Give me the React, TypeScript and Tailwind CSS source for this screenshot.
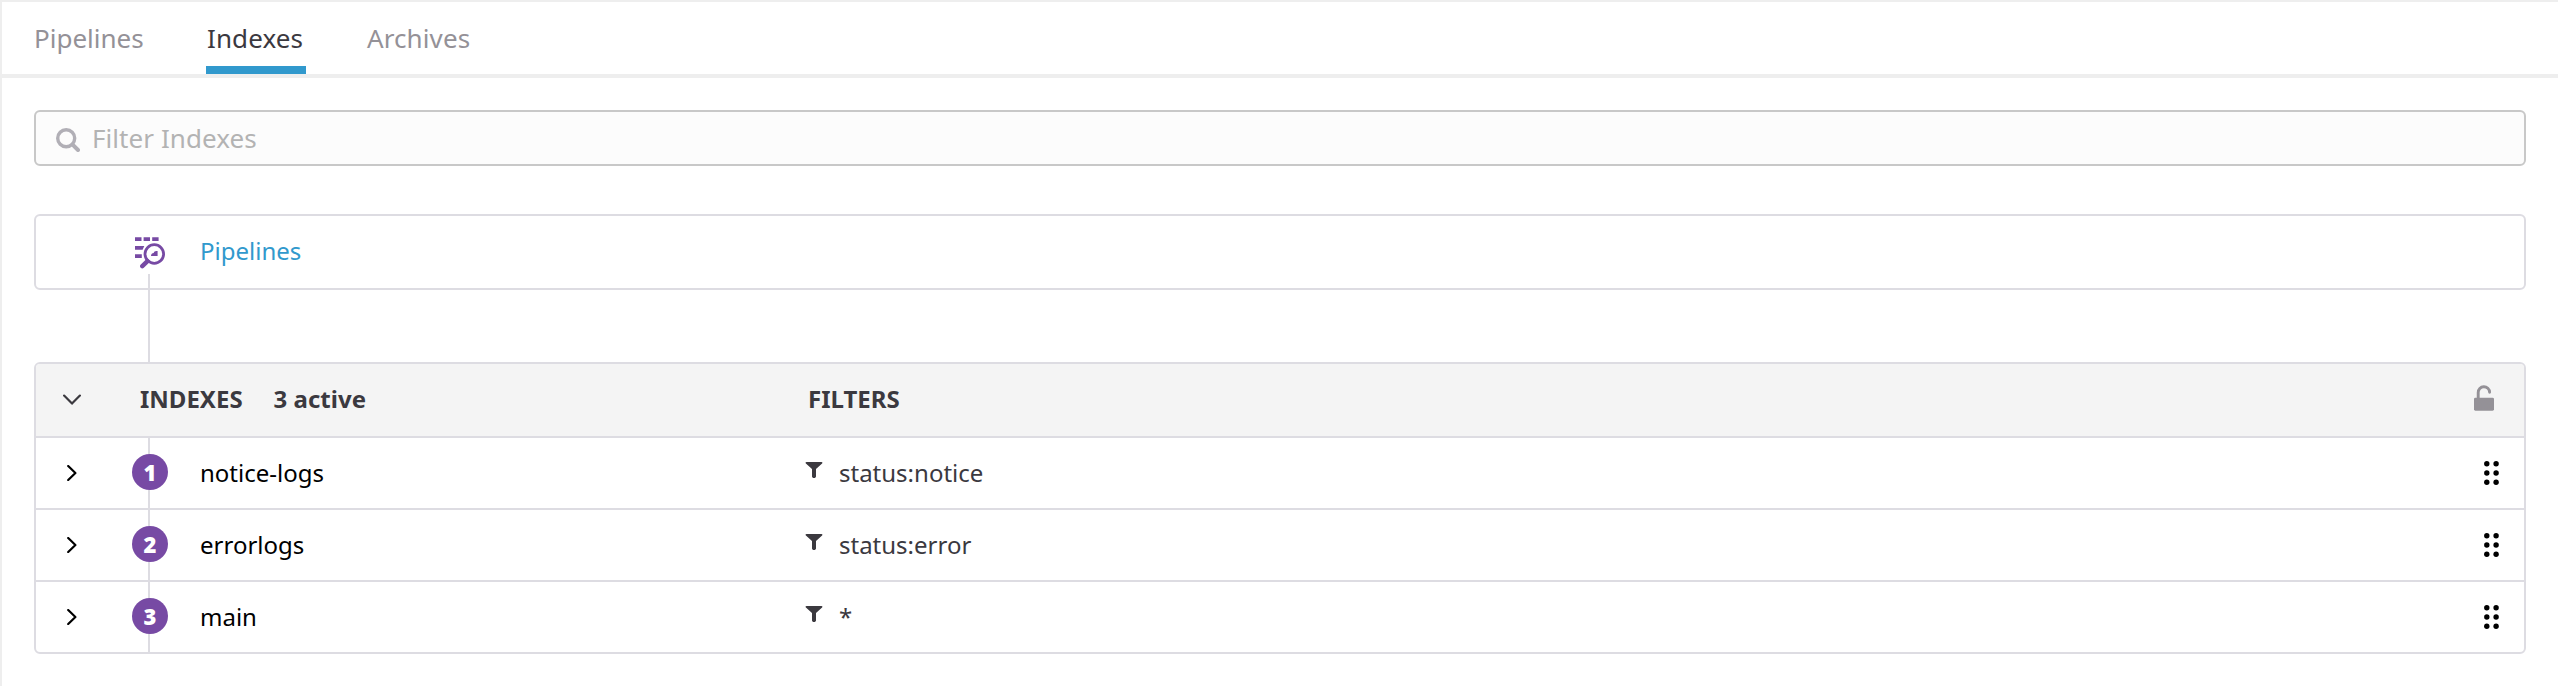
import React from "react";

const rows = [
  { id: 1, name: "notice-logs", filter: "status:notice" },
  { id: 2, name: "errorlogs", filter: "status:error" },
  { id: 3, name: "main", filter: "*" },
];

function SearchIcon() {
  return (
    <svg className="mt-1 h-6 w-6 shrink-0" viewBox="0 0 24 24" fill="none" stroke="#b1afb6">
      <circle cx="10.2" cy="10.2" r="8.5" strokeWidth="3.4" />
      <path d="M16.6 16.6 22 22" strokeWidth="4" strokeLinecap="round" />
    </svg>
  );
}

function PipelineIcon() {
  return (
    <svg className="mt-0.5 h-8 w-[31px] shrink-0" viewBox="0 0 31 32" fill="#774aa4">
      <path d="M0 .2h6.5v3.8H0zM8.6.2H15v3.8H8.6zM17.2.2h6.4v3.8h-6.4zM0 8.9h9.3L7.6 12.7H0zM0 17.2h6.8v3.8H0z" />
      <circle cx="19.3" cy="17" r="9.3" fill="none" stroke="#774aa4" strokeWidth="2.8" />
      <path d="M12.5 24.2 7.3 29.2" stroke="#774aa4" strokeWidth="4.4" strokeLinecap="round" />
      <path d="M16 19c0-2 1.2-2.8 2.7-3 .2-1.3 1.3-2 2.6-2h1.3v5z" />
    </svg>
  );
}

function FilterIcon() {
  return (
    <svg className="h-4 w-[18px] shrink-0" viewBox="0 0 18 16" fill="#3b393f">
      <path d="M1.5 0h15c1 0 1.2.9.6 1.5L11 7v7.5c0 .9-.8 1.5-2 1.5s-2-.6-2-1.5V7L.9 1.5C.3.9.5 0 1.5 0z" />
    </svg>
  );
}

function UnlockIcon() {
  return (
    <svg className="h-[26px] w-5" viewBox="0 0 20 26">
      <path d="M4.2 14V7.6a5.7 5.7 0 0 1 11.4-.3" fill="none" stroke="#949197" strokeWidth="2.9" strokeLinecap="round" />
      <rect x="0" y="12.7" width="20" height="13" rx="1.4" fill="#949197" />
    </svg>
  );
}

function GripIcon() {
  return (
    <svg className="h-6 w-4" viewBox="0 0 16 24">
      <circle cx="2.8" cy="2.8" r="2.7" />
      <circle cx="12.1" cy="2.8" r="2.7" />
      <circle cx="2.8" cy="12" r="2.7" />
      <circle cx="12.1" cy="12" r="2.7" />
      <circle cx="2.8" cy="21.3" r="2.7" />
      <circle cx="12.1" cy="21.3" r="2.7" />
    </svg>
  );
}

export default function App() {
  return (
    <div className="h-[686px] w-full border-t-2 border-l-2 border-[#eeeeee] bg-white font-['Noto_Sans',sans-serif] text-[24px] leading-8 text-[#3b393f]">
      <nav className="flex h-[76px] gap-[62px] border-b-4 border-[#eeeeee] pl-8 text-[26px] text-[#949197]">
        <a className="flex h-[72px] w-[110px] items-center">Pipelines</a>
        <a className="flex h-[72px] w-[100px] items-center border-b-8 border-[#3199cd] pt-2 pl-px tracking-[0.1px] text-[#3b393f]">
          Indexes
        </a>
        <a className="-ml-px flex h-[72px] items-center tracking-[0.1px]">Archives</a>
      </nav>

      <main className="pt-8 pr-8 pl-8">
        <div className="flex h-14 items-center gap-3 rounded-md border-2 border-[#c8c8c8] bg-[#fcfcfc] pl-5 text-[26px] tracking-[0.07px] text-[#b3b3b3]">
          <SearchIcon />
          <span>Filter Indexes</span>
        </div>

        <section className="relative mt-12 flex h-[76px] items-center rounded-md border-2 border-[#dddce2] pl-[99px]">
          <PipelineIcon />
          <a className="-mt-0.5 ml-[34px] text-[#3199cd]">Pipelines</a>
          <span className="absolute top-[58px] left-28 h-[88px] w-0.5 bg-[#dddce2]" />
        </section>

        <section className="mt-[72px] overflow-hidden rounded-md border-2 border-[#dddce2]">
          <header className="flex h-[74px] items-center border-b-2 border-[#dddce2] bg-[#f4f4f4] font-bold">
            <div className="flex w-[104px] pl-[27px]">
              <svg className="h-3 w-[18px]" viewBox="0 0 18 12" fill="none" stroke="#3b393f" strokeWidth="2.2" strokeLinecap="round" strokeLinejoin="round">
                <path d="m1.1 1.6 7.9 8 7.9-8" />
              </svg>
            </div>
            <div className="-mt-0.5 flex w-[668px] gap-[31px]">
              <span>INDEXES</span>
              <span>3 active</span>
            </div>
            <span className="-mt-0.5 grow">FILTERS</span>
            <div className="mr-[30px] mb-1">
              <UnlockIcon />
            </div>
          </header>

          {rows.map((row) => (
            <div key={row.id} className="flex h-[72px] items-center border-b-2 border-[#dddce2] last:h-[70px] last:border-b-0">
              <div className="w-[96px] pl-[31px]">
                <svg className="h-4 w-[10px]" viewBox="0 0 10 16" fill="none" stroke="#000" strokeWidth="2.2" strokeLinecap="round" strokeLinejoin="round">
                  <path d="m1.2 1 7.2 7-7.2 7" />
                </svg>
              </div>
              <div className="relative flex h-full w-9 items-center">
                <span className="absolute top-0 left-4 h-full w-0.5 bg-[#dddce2]" />
                <span className="relative -mt-0.5 flex h-9 w-9 items-center justify-center rounded-full bg-[#774aa4] text-[22px] font-black text-white">
                  {row.id}
                </span>
              </div>
              <span className="ml-8 w-[603px] text-black">{row.name}</span>
              <div className="flex grow">
                <span className="mt-[5px] ml-0.5">
                  <FilterIcon />
                </span>
                <span className="ml-4">{row.filter}</span>
              </div>
              <div className="mr-6">
                <GripIcon />
              </div>
            </div>
          ))}
        </section>
      </main>
    </div>
  );
}
